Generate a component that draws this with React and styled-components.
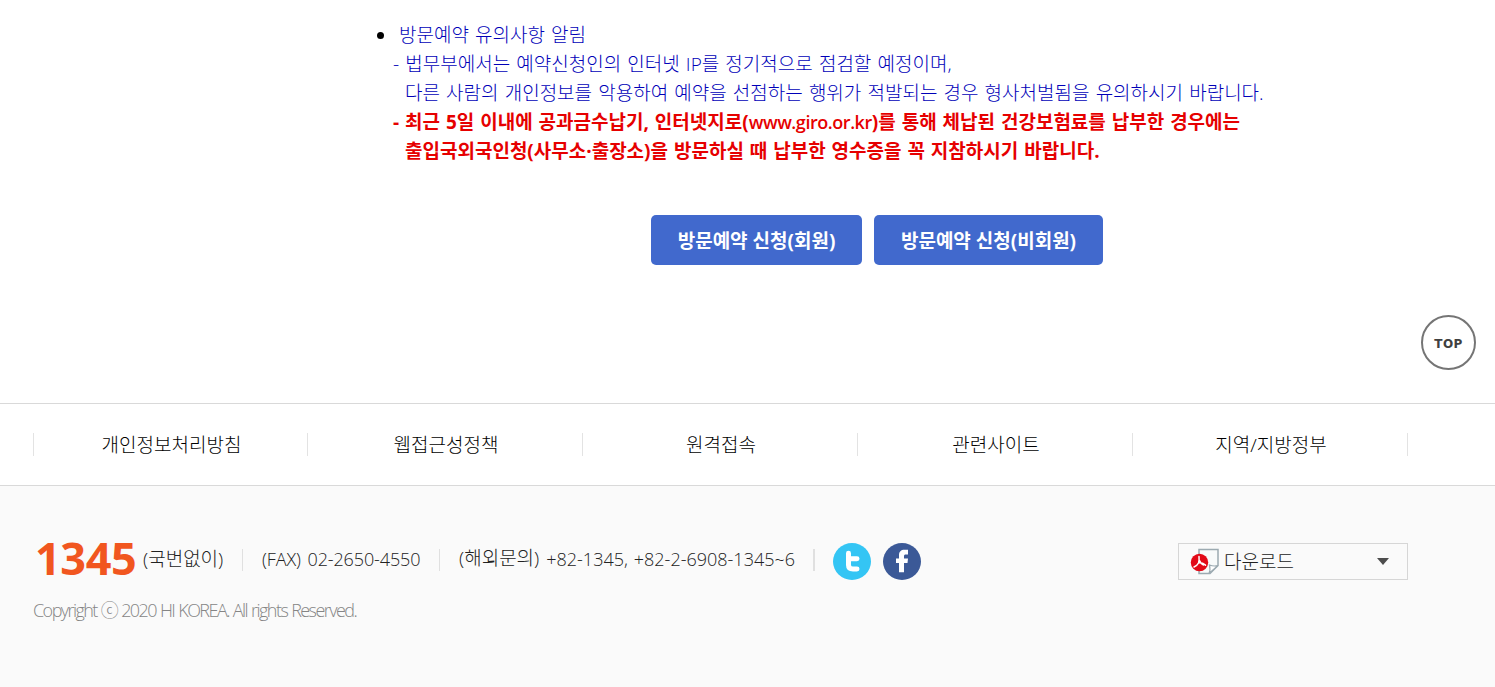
import React from "react";
import styled, { createGlobalStyle } from "styled-components";

const GlobalStyle = createGlobalStyle`
  * {
    box-sizing: border-box;
  }

  body {
    margin: 0;
    background: #fff;
    font-family: "Open Sans", "Noto Sans CJK KR", sans-serif;
    font-size: 18px;
    font-weight: 300;
    color: #000;
  }

  ul {
    margin: 0;
    padding: 0;
    list-style: none;
  }
`;

const Page = styled.div`
  position: relative;
  height: 687px;
  display: flex;
  flex-direction: column;
  overflow: hidden;
`;

const Main = styled.main`
  height: 403px;
  padding: 21px 0 0 377px;
`;

const Notice = styled.div`
  height: 145px;
`;

const NoticeLine = styled.p`
  margin: 0;
  height: 29px;
  line-height: 29px;
  padding-left: ${({ $indent }) => $indent}px;
  font-size: 19px;
  font-weight: ${({ $strong }) => ($strong ? 700 : 300)};
  color: ${({ $strong }) => ($strong ? "#e60000" : "#0000b8")};
  word-spacing: ${({ $strong }) => ($strong ? 1 : 1.2)}px;
  white-space: nowrap;
`;

const SiteAddress = styled.span`
  font-size: 18px;
  font-weight: 600;
  letter-spacing: -0.45px;
`;

const TitleRow = styled.div`
  display: flex;
  align-items: center;
`;

const Bullet = styled.span`
  width: 7px;
  height: 7px;
  border-radius: 50%;
  background: #000;
`;

const Buttons = styled.div`
  display: flex;
  gap: 12px;
  margin: 49px 0 0 274px;
`;

const Button = styled.button`
  width: ${({ $width }) => $width}px;
  height: 50px;
  padding: 0;
  border: 0;
  border-radius: 5px;
  background: #4169cd;
  color: #fff;
  font: inherit;
  font-size: 19px;
  font-weight: 700;
  white-space: nowrap;
`;

const TopButton = styled.a`
  position: absolute;
  top: 315px;
  right: 19px;
  width: 55px;
  height: 55px;
  padding-top: 2px;
  display: flex;
  align-items: center;
  justify-content: center;
  border: 2px solid #757575;
  border-radius: 50%;
  background: #fff;
  color: #404040;
  font-family: "DejaVu Sans", sans-serif;
  font-size: 12px;
  font-weight: 700;
  letter-spacing: 0.4px;
`;

const Nav = styled.nav`
  height: 83px;
  padding: 29px 87px 0 33px;
  border-top: 1px solid #d9d9d9;
  border-bottom: 1px solid #d9d9d9;
`;

const NavList = styled.ul`
  display: grid;
  grid-template-columns: repeat(5, 1fr);
  height: 23px;
`;

const NavItem = styled.li`
  height: 23px;
  padding-left: 2px;
  line-height: 25px;
  border-right: 1px solid #e3e3e3;
  font-size: 19px;
  text-align: center;
  white-space: nowrap;

  &:first-child {
    border-left: 1px solid #e3e3e3;
  }
`;

const Footer = styled.footer`
  flex: 1;
  padding: 51px 87px 0 33px;
  background: #fafafa;
`;

const FooterRow = styled.div`
  display: flex;
  height: 46px;
`;

const Contact = styled.ul`
  display: flex;
  align-items: center;
  color: #222;
`;

const ContactItem = styled.li`
  width: ${({ $width }) => $width}px;
  height: 22px;
  line-height: 20px;
  padding-left: ${({ $first }) => ($first ? 2 : 19)}px;
  border-right: ${({ $rule }) => $rule || 1}px solid #e0e0e0;
  letter-spacing: ${({ $spacing }) => $spacing || 0}px;
  word-spacing: ${({ $gap }) => $gap || 0}px;
  white-space: nowrap;
`;

const CallItem = styled(ContactItem)`
  display: flex;
  align-items: center;
`;

const CallNumber = styled.strong`
  width: 108px;
  margin-top: -4px;
  color: #f1561f;
  font-size: 45px;
  font-weight: 700;
  letter-spacing: -0.4px;
`;

const Note = styled.span`
  position: relative;
  top: -1px;
  margin-right: 1px;
  font-size: 19px;
  letter-spacing: 0;
`;

const Social = styled.div`
  display: flex;
  gap: 12px;
  margin: 6px 0 0 18px;

  svg {
    display: block;
  }
`;

const Download = styled.div`
  display: flex;
  align-items: center;
  width: 230px;
  height: 37px;
  margin: 6px 0 0 auto;
  padding: 0 18px 0 11px;
  border: 1px solid #d6d6d6;
  color: #222;
`;

const DownloadLabel = styled.span`
  flex: 1;
  padding: 0 0 1px 4px;
  font-size: 19px;
`;

const Copyright = styled.p`
  margin: 13px 0 0;
  line-height: 28px;
  color: #858585;
  font-size: 18px;
  letter-spacing: -1.55px;
  word-spacing: 0.8px;
  white-space: nowrap;
`;

const TwitterIcon = () => (
  <svg width="38" height="37" viewBox="0 0 38 38" preserveAspectRatio="none">
    <circle cx="19" cy="19" r="19" fill="#34c5f4" />
    <path
      d="M15.500 10.500v12q0 4.200 4.500 4.200h4M15.500 16.200H24"
      fill="none"
      stroke="#fff"
      strokeWidth="5"
      strokeLinecap="round"
      strokeLinejoin="round"
    />
  </svg>
);

const FacebookIcon = () => (
  <svg width="38" height="37" viewBox="0 0 38 38" preserveAspectRatio="none">
    <circle cx="19" cy="19" r="19" fill="#3b5997" />
    <path
      d="M16 30V20.500h-3V16h3v-3.500C16 9 18 7 21.500 7H25v4.800h-2.200c-1.300 0-1.800.6-1.800 1.700V16h4l-.5 4.500H21V30z"
      fill="#fff"
    />
  </svg>
);

const PdfIcon = () => (
  <svg width="30" height="27" viewBox="0 0 30 27">
    <path
      d="M9 1.500h19v16L20 25.500H9z"
      fill="#f8fafa"
      stroke="#9caab1"
      strokeWidth="1.500"
    />
    <path
      d="M19 25.500c1.500-3 1.300-5 .5-8.500 3 1.200 5.500 1.300 8.500.5z"
      fill="#fff"
      stroke="#9caab1"
      strokeWidth="1.200"
    />
    <circle cx="9.500" cy="14.500" r="8.700" fill="#e20a17" />
    <path
      d="M9 8.500c.3 3 .2 5-.5 6.500s-2.500 3-4.500 4M8.500 15c2.500-.5 4.500.2 7 2.200M9.500 12.500c.8 2.200 2 3.500 4 4.500"
      fill="none"
      stroke="#fff"
      strokeWidth="1.500"
      strokeLinecap="round"
    />
  </svg>
);

const CaretIcon = () => (
  <svg width="12" height="7" viewBox="0 0 12 7">
    <path d="M0 0h12L6 7z" fill="#4d4d4d" />
  </svg>
);

const links = [
  "개인정보처리방침",
  "웹접근성정책",
  "원격접속",
  "관련사이트",
  "지역/지방정부",
];

const App = () => {
  return (
    <>
      <GlobalStyle />
      <Page>
        <Main>
          <Notice>
            <TitleRow>
              <Bullet />
              <NoticeLine $indent={15}>방문예약 유의사항 알림</NoticeLine>
            </TitleRow>
            <NoticeLine $indent={16}>
              - 법무부에서는 예약신청인의 인터넷 IP를 정기적으로 점검할
              예정이며,
            </NoticeLine>
            <NoticeLine $indent={28}>
              다른 사람의 개인정보를 악용하여 예약을 선점하는 행위가 적발되는
              경우 형사처벌됨을 유의하시기 바랍니다.
            </NoticeLine>
            <NoticeLine $indent={16} $strong>
              - 최근 5일 이내에 공과금수납기, 인터넷지로(
              <SiteAddress>www.giro.or.kr</SiteAddress>)를 통해 체납된
              건강보험료를 납부한 경우에는
            </NoticeLine>
            <NoticeLine $indent={28} $strong>
              출입국외국인청(사무소·출장소)을 방문하실 때 납부한 영수증을 꼭
              지참하시기 바랍니다.
            </NoticeLine>
          </Notice>
          <Buttons>
            <Button $width={211}>방문예약 신청(회원)</Button>
            <Button $width={229}>방문예약 신청(비회원)</Button>
          </Buttons>
        </Main>
        <TopButton>TOP</TopButton>
        <Nav>
          <NavList>
            {links.map((link) => (
              <NavItem key={link}>{link}</NavItem>
            ))}
          </NavList>
        </Nav>
        <Footer>
          <FooterRow>
            <Contact>
              <CallItem $width={210} $first>
                <CallNumber>1345</CallNumber>
                <Note>(국번없이)</Note>
              </CallItem>
              <ContactItem $width={197} $spacing={-0.12} $gap={2.2}>
                (FAX) 02-2650-4550
              </ContactItem>
              <ContactItem $width={375} $rule={2} $gap={1.3}>
                <Note>(해외문의)</Note> +82-1345, +82-2-6908-1345~6
              </ContactItem>
            </Contact>
            <Social>
              <TwitterIcon />
              <FacebookIcon />
            </Social>
            <Download>
              <PdfIcon />
              <DownloadLabel>다운로드</DownloadLabel>
              <CaretIcon />
            </Download>
          </FooterRow>
          <Copyright>Copyright ⓒ 2020 HI KOREA. All rights Reserved.</Copyright>
        </Footer>
      </Page>
    </>
  );
};

export default App;
